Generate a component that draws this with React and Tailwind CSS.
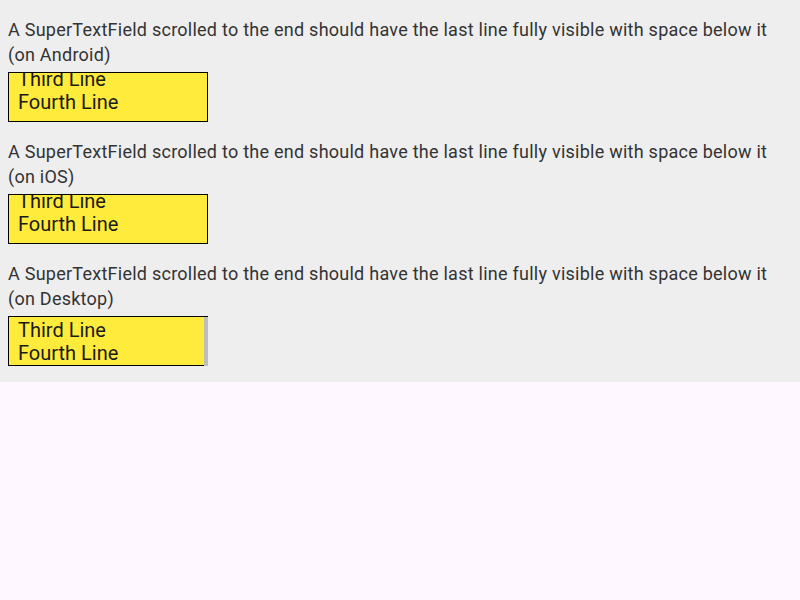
export default function App() {
  const sections = [
    { label: "(on Android)", scrolled: true },
    { label: "(on iOS)", scrolled: true },
    { label: "(on Desktop)", scrolled: false },
  ];
  return (
    <div className="w-[800px] h-[600px] bg-[#fef7ff] flex flex-col" style={{ fontFamily: "Roboto, sans-serif" }}>
      <div className="bg-[#eeeeee] px-2 pt-[17px] pb-4 flex flex-col gap-[17px]">
        {sections.map((s, i) => (
          <div key={i} className="flex flex-col">
            <div className="text-[18px] leading-[25px] tracking-[0.25px] text-[#333333]">
              A SuperTextField scrolled to the end should have the last line fully visible with space below it
              <br />
              {s.label}
            </div>
            <div className="mt-[5px] w-[200px] h-[50px] border border-black bg-[#ffeb3b] relative">
              <div className="w-full h-full overflow-hidden">
                <div className={"pl-[9px] text-[20px] leading-[23px] text-[#1a1a1a] " + (s.scrolled ? "mt-[-5px]" : "mt-[2px]")}>
                  <div>Third Line</div>
                  <div>Fourth Line</div>
                </div>
              </div>
              {!s.scrolled && (
                <div className="absolute right-[-1px] top-0 bottom-[-1px] w-[4px] bg-[#bdbdbd]" />
              )}
            </div>
          </div>
        ))}
      </div>
    </div>
  );
}
